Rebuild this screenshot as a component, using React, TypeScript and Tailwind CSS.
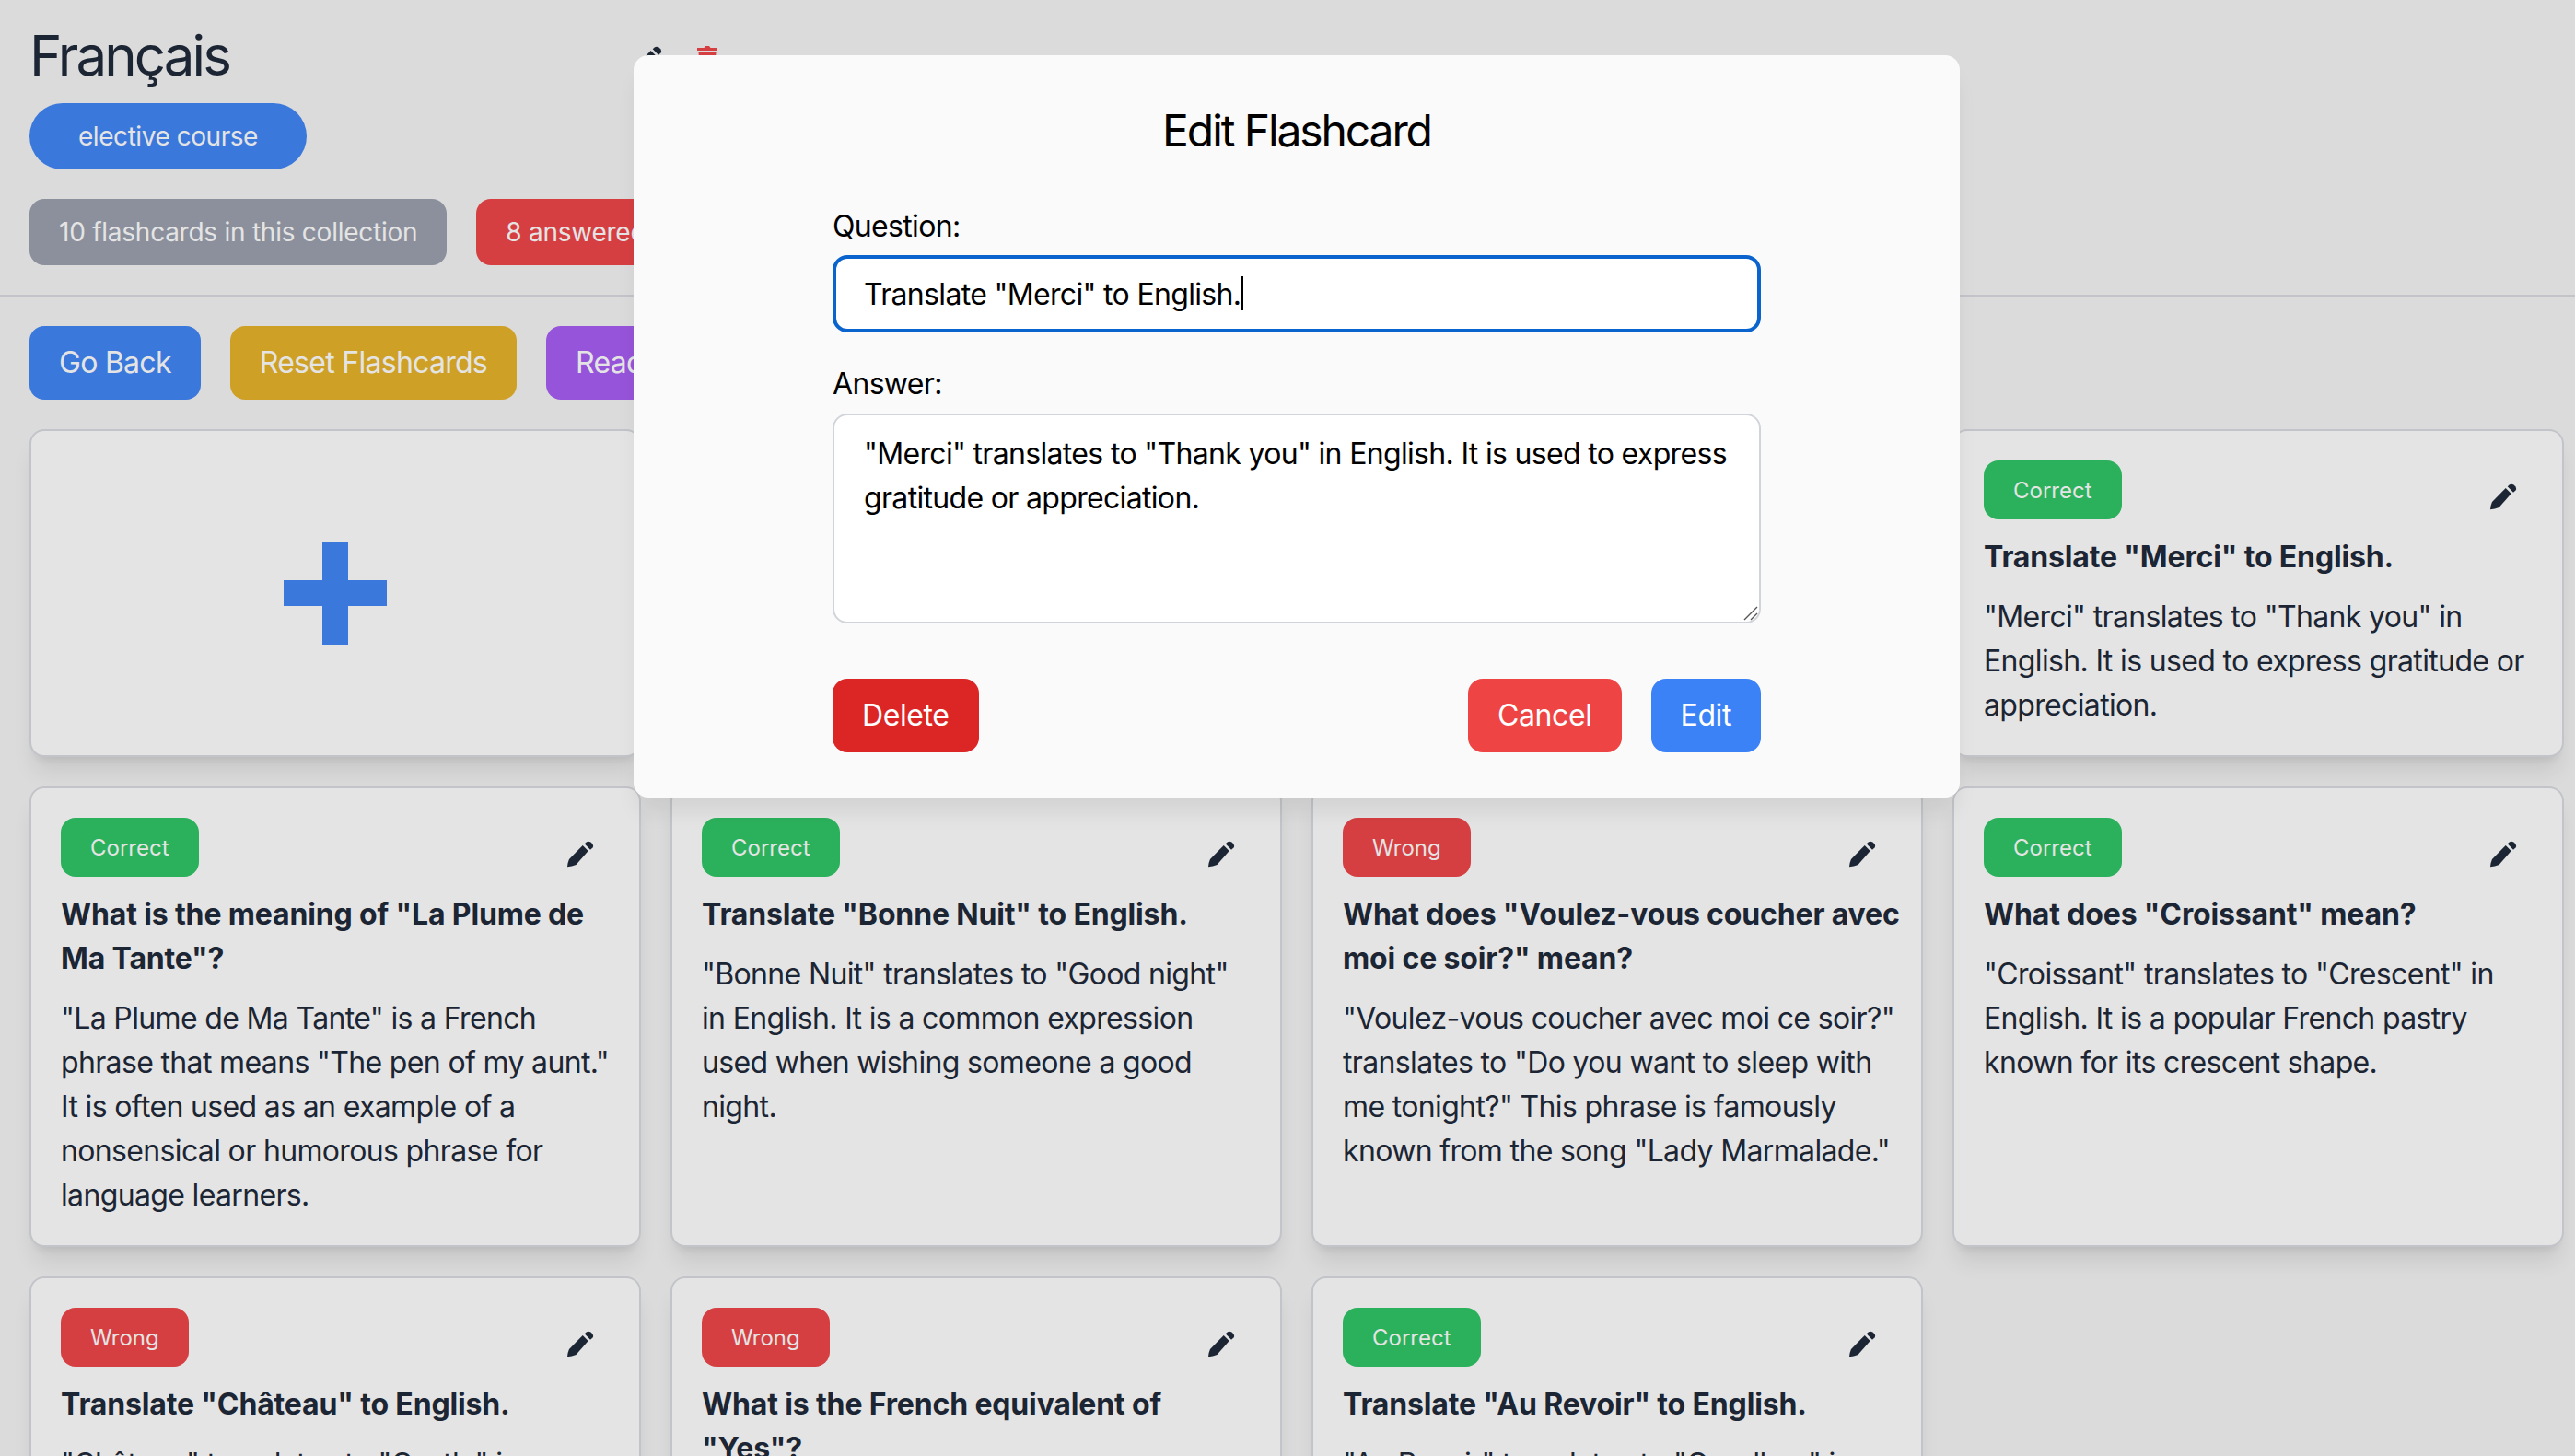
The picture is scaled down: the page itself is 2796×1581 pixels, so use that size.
import { useEffect, useRef } from "react";

type Card = {
  status: "Correct" | "Wrong";
  question: string;
  answer: string;
};

const firstRow: Card[] = [
  {
    status: "Correct",
    question: 'Translate "Bonjour" to English.',
    answer: '"Bonjour" translates to "Hello" in English. It is a common greeting.',
  },
  {
    status: "Wrong",
    question: 'Translate "S\'il vous plaît" to English.',
    answer: '"S\'il vous plaît" translates to "Please" in English.',
  },
  {
    status: "Correct",
    question: 'Translate "Merci" to English.',
    answer: '"Merci" translates to "Thank you" in English. It is used to express gratitude or appreciation.',
  },
];

const cards: Card[] = [
  {
    status: "Correct",
    question: 'What is the meaning of "La Plume de Ma Tante"?',
    answer:
      '"La Plume de Ma Tante" is a French phrase that means "The pen of my aunt." It is often used as an example of a nonsensical or humorous phrase for language learners.',
  },
  {
    status: "Correct",
    question: 'Translate "Bonne Nuit" to English.',
    answer:
      '"Bonne Nuit" translates to "Good night" in English. It is a common expression used when wishing someone a good night.',
  },
  {
    status: "Wrong",
    question: 'What does "Voulez-vous coucher avec moi ce soir?" mean?',
    answer:
      '"Voulez-vous coucher avec moi ce soir?" translates to "Do you want to sleep with me tonight?" This phrase is famously known from the song "Lady Marmalade."',
  },
  {
    status: "Correct",
    question: 'What does "Croissant" mean?',
    answer:
      '"Croissant" translates to "Crescent" in English. It is a popular French pastry known for its crescent shape.',
  },
  {
    status: "Wrong",
    question: 'Translate "Château" to English.',
    answer: '"Château" translates to "Castle" in English.',
  },
  {
    status: "Wrong",
    question: 'What is the French equivalent of "Yes"?',
    answer: 'The French equivalent of "Yes" is "Oui."',
  },
  {
    status: "Correct",
    question: 'Translate "Au Revoir" to English.',
    answer: '"Au Revoir" translates to "Goodbye" in English.',
  },
];

function PencilIcon() {
  return (
    <svg viewBox="0 0 30 30" className="block h-[30px] w-[30px] fill-[#1c2533]">
      <path d="M17.7 5 23.7 11 10.5 26Q6 28 1 28.3 1.5 23 3 20Z" />
      <path d="M19.7 3.3 22 1.3Q24 .3 26.5 1.5L28.5 3.5Q29.7 5.7 28.5 7.5L26 9.7Z" />
    </svg>
  );
}

function TrashIcon() {
  return (
    <svg viewBox="0 0 22 26" className="block h-[26px] w-[22px] fill-[#d63f42]">
      <path d="M7.5 2 9 0H13L14.5 2H22V5H0V2Z" />
      <path d="M1.5 7H20.5L19 26H3Z" />
    </svg>
  );
}

function Flashcard({ card }: { card: Card }) {
  return (
    <div className="rounded-2xl border-2 border-[#c2c4c9] bg-[#e4e4e4] px-8 pb-[30px] pt-8 shadow-[0_20px_25px_-5px_rgba(0,0,0,0.09),0_8px_10px_-6px_rgba(0,0,0,0.09)]">
      <div className="flex items-start justify-between">
        <span
          className={`rounded-2xl px-8 pb-[15px] pt-[17px] text-[24px] leading-8 text-[#e4e4e4] ${
            card.status === "Correct" ? "bg-[#2bb15b]" : "bg-[#d63f42]"
          }`}
        >
          {card.status}
        </span>
        <button className="mr-[17px] mt-[25px]">
          <PencilIcon />
        </button>
      </div>
      <h3 className="-mr-3 mt-[17px] text-[32px] font-bold leading-[48px] tracking-[-0.15px] text-[#1c2533]">{card.question}</h3>
      <p className="-mr-1.5 mt-[17px] text-[32px] leading-[48px] tracking-[-0.65px] text-[#1c2533]">{card.answer}</p>
    </div>
  );
}

function EditModal() {
  const questionRef = useRef<HTMLInputElement>(null);

  useEffect(() => {
    const el = questionRef.current;
    if (el) {
      el.focus();
      el.setSelectionRange(el.value.length, el.value.length);
    }
  }, []);

  return (
    <div className="absolute left-[688px] top-[60px] h-[806px] w-[1440px] rounded-2xl bg-[#fafafa] px-[216px] pt-[46px] tracking-[-0.67px] shadow-[0_20px_25px_-5px_rgba(0,0,0,0.08)]">
      <h2 className="mb-[44px] text-center text-[48px] font-normal leading-[72px] tracking-[-2.1px] text-black">Edit Flashcard</h2>
      <label className="mb-[7px] block text-[32px] leading-[48px] text-black">Question:</label>
      <div className="relative mb-8">
        <input
          ref={questionRef}
          defaultValue={'Translate "Merci" to English.'}
          className="block h-[84px] w-full rounded-2xl border-4 border-[#0b63ce] bg-white px-[30px] text-[32px] text-black caret-transparent outline-none"
        />
        <span className="absolute left-[444px] top-[23px] h-[37px] w-[2px] bg-black" />
      </div>
      <label className="mb-2 block text-[32px] leading-[48px] text-black">Answer:</label>
      <div className="relative">
        <textarea
          defaultValue={'"Merci" translates to "Thank you" in English. It is used to express gratitude or appreciation.'}
          className="block h-[228px] w-full resize-none rounded-2xl border-2 border-[#d1d5db] bg-white py-[18px] pl-8 pr-5 text-[32px] leading-[48px] text-black outline-none"
        />
        <svg viewBox="0 0 16 16" className="absolute bottom-[3px] right-[3px] h-4 w-4 fill-none stroke-[#555] stroke-[1.4]">
          <path d="M1 15 15 1M8 15 15 8" />
        </svg>
      </div>
      <div className="mt-[60px] flex items-center justify-between tracking-[-0.4px]">
        <button className="rounded-2xl bg-[#dc2626] px-8 py-4 text-[32px] leading-[48px] text-white">Delete</button>
        <div className="flex gap-8">
          <button className="rounded-2xl bg-[#ef4444] px-8 py-4 text-[32px] leading-[48px] text-white">Cancel</button>
          <button className="rounded-2xl bg-[#3b82f6] px-8 py-4 text-[32px] leading-[48px] text-white">Edit</button>
        </div>
      </div>
    </div>
  );
}

export default function App() {
  return (
    <div className="relative h-screen overflow-hidden bg-[#dbdbdb] font-[Inter,sans-serif]">
      <header className="border-b-2 border-[#c2c4c9] px-8 pb-8 pt-6">
        <div className="flex items-start">
          <h1 className="w-[657px] text-[60px] font-normal leading-[72px] tracking-[-2.9px] text-[#1c2533]">Français</h1>
          <div className="mt-[26px] flex items-start gap-[38px]">
            <PencilIcon />
            <TrashIcon />
          </div>
        </div>
        <span className="mt-4 inline-block rounded-full bg-[#3b78dc] px-[53px] py-4 text-[28px] leading-10 tracking-[-0.45px] text-[#e4e4e4]">
          elective course
        </span>
        <div className="mt-8 flex gap-8">
          <span className="rounded-2xl bg-[#8b909c] px-8 py-4 text-[28px] leading-10 tracking-[-0.25px] text-[#e4e4e4]">
            10 flashcards in this collection
          </span>
          <span className="rounded-2xl bg-[#d63f42] px-8 py-4 text-[28px] leading-10 tracking-[-0.25px] text-[#e4e4e4]">8 answered</span>
        </div>
      </header>

      <main className="pl-8 pr-3 pt-8">
        <div className="flex gap-8 tracking-[-0.72px]">
          <button className="rounded-2xl bg-[#3b78dc] px-8 py-4 text-[32px] leading-[48px] text-[#e4e4e4]">Go Back</button>
          <button className="rounded-2xl bg-[#cfa026] px-8 py-4 text-[32px] leading-[48px] text-[#e4e4e4]">Reset Flashcards</button>
          <button className="rounded-2xl bg-[#9654da] px-8 py-4 text-[32px] leading-[48px] text-[#e4e4e4]">Read Aloud</button>
        </div>

        <div className="mt-8 grid grid-cols-4 gap-8">
          <button className="flex items-center justify-center rounded-2xl border-2 border-[#c2c4c9] bg-[#e4e4e4] shadow-[0_20px_25px_-5px_rgba(0,0,0,0.09),0_8px_10px_-6px_rgba(0,0,0,0.09)]">
            <svg viewBox="0 0 112 112" className="h-[112px] w-[112px] fill-[#3b78dc]">
              <path d="M42 0H70V42H112V70H70V112H42V70H0V42H42Z" />
            </svg>
          </button>
          {firstRow.map((card) => (
            <Flashcard key={card.question} card={card} />
          ))}
          {cards.map((card) => (
            <Flashcard key={card.question} card={card} />
          ))}
        </div>
      </main>

      <EditModal />
    </div>
  );
}
